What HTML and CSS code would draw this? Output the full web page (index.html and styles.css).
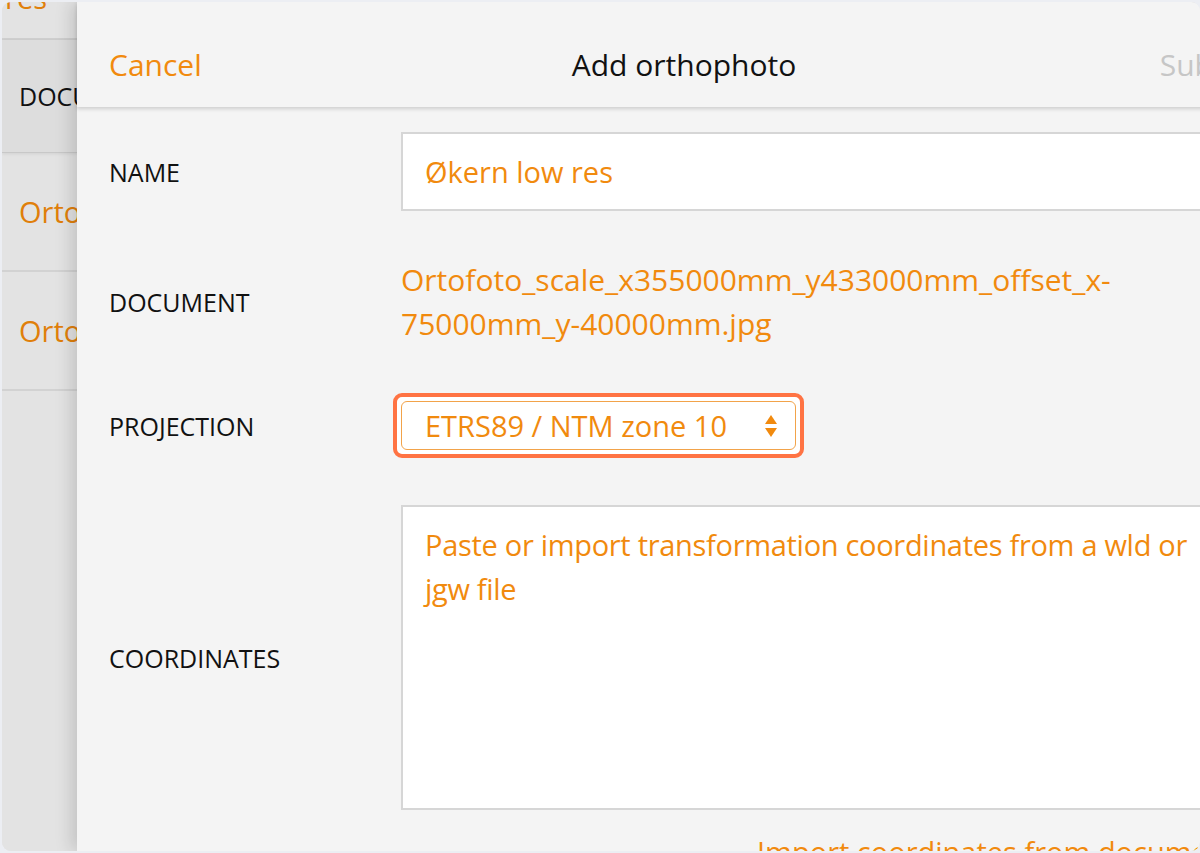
FILE: index.html
```html
<!DOCTYPE html>
<html lang="en">
<head>
<meta charset="utf-8">
<title>Add orthophoto</title>
<link rel="stylesheet" href="styles.css">
</head>
<body>
<div class="screen">
  <aside class="sidebar">
    <div class="side-row side-top"><span class="side-link side-cut">Økern low res</span></div>
    <div class="side-row side-head"><span class="side-label">DOCUMENT</span></div>
    <div class="side-row side-item"><span class="side-link">Ortofoto</span></div>
    <div class="side-row side-item"><span class="side-link">Ortofoto</span></div>
  </aside>
  <section class="modal">
    <header class="modal-head">
      <span class="head-btn">Cancel</span>
      <span class="head-title">Add orthophoto</span>
      <span class="head-btn head-submit">Submit</span>
    </header>
    <div class="form">
      <div class="row row-name">
        <label class="label">NAME</label>
        <div class="input"><span class="value">Økern low res</span></div>
      </div>
      <div class="row row-doc">
        <label class="label">DOCUMENT</label>
        <div class="doc-text">Ortofoto_scale_x355000mm_y433000mm_offset_x-<br>75000mm_y-40000mm.jpg</div>
      </div>
      <div class="row row-proj">
        <label class="label">PROJECTION</label>
        <div class="select-ring">
          <div class="select">
            <span class="value">ETRS89 / NTM zone 10</span>
            <svg class="arrows" width="14" height="26" viewBox="0 0 14 26" aria-hidden="true">
              <path d="M7 2 L13 11 L1 11 Z" fill="#f18a0e"/>
              <path d="M1 15 L13 15 L7 24 Z" fill="#f18a0e"/>
            </svg>
          </div>
        </div>
      </div>
      <div class="row row-coord">
        <label class="label">COORDINATES</label>
        <div class="textarea"><span class="placeholder">Paste or import transformation coordinates from a wld or jgw file</span></div>
      </div>
      <div class="import-row"><span class="import-link">Import coordinates from document</span></div>
    </div>
  </section>
</div>
</body>
</html>
```

FILE: styles.css
```css
html, body {
  margin: 0;
  padding: 0;
  background: #eceef3;
  overflow: hidden;
}
body {
  width: 1200px;
  height: 853px;
  font-family: "Open Sans", "Noto Sans", sans-serif;
}
.screen {
  margin: 2px 0 2px 2px;
  height: 849px;
  border-radius: 9px;
  overflow: hidden;
  display: flex;
  background: #e3e3e3;
}
.sidebar {
  width: 75px;
  flex: none;
  overflow: hidden;
  background: #e3e3e3;
}
.side-row {
  width: 300px;
  flex: none;
  box-sizing: border-box;
  padding-left: 17px;
  display: flex;
  align-items: center;
  border-bottom: 2px solid #cfcfcf;
}
.side-top {
  width: 75px;
  height: 38px;
  padding: 0 30px 0 0;
  align-items: flex-start;
  justify-content: flex-end;
  overflow: hidden;
}
.side-cut {
  margin-top: -24px;
}
.side-head {
  height: 113px;
  background: #dddddd;
  border-bottom: 1px solid #c8c8c8;
  box-shadow: 0 1px 3px rgba(0,0,0,0.08);
}
.side-item {
  height: 119px;
  border-bottom: 2px solid #d2d2d2;
}
.side-label {
  font-size: 25px;
  color: #111;
}
.side-link {
  font-size: 29px;
  color: #e07f0a;
  white-space: nowrap;
}
.modal {
  width: 1214px;
  flex: none;
  background: #f4f4f4;
  box-shadow: -6px 0 16px rgba(0,0,0,0.14);
  display: flex;
  flex-direction: column;
  position: relative;
}
.modal-head {
  flex: none;
  height: 105px;
  box-sizing: border-box;
  padding: 20px 32px 0 32px;
  display: flex;
  align-items: center;
  justify-content: space-between;
  background: #f4f4f4;
  box-shadow: 0 2px 4px rgba(0,0,0,0.16);
  position: relative;
  z-index: 1;
}
.head-btn {
  font-size: 30px;
  color: #f18a0e;
  width: 160px;
}
.head-submit {
  color: #c6c6c6;
  text-align: right;
}
.head-title {
  font-size: 30px;
  color: #111;
}
.form {
  flex: none;
  padding: 0 32px;
  display: flex;
  flex-direction: column;
}
.row {
  flex: none;
  display: flex;
  align-items: center;
}
.label {
  width: 292px;
  flex: none;
  font-size: 25px;
  color: #111;
}
.value, .placeholder, .import-link {
  font-size: 29px;
  color: #f18a0e;
}
.doc-text {
  font-size: 30px;
  color: #f18a0e;
  line-height: 44px;
  white-space: nowrap;
}
.row-name {
  margin-top: 25px;
}
.input {
  flex: 1;
  height: 79px;
  box-sizing: border-box;
  background: #fff;
  border: 2px solid #d6d6d6;
  display: flex;
  align-items: center;
  padding-left: 22px;
}
.row-doc {
  margin-top: 47px;
}
.row-proj {
  margin-top: 47px;
}
.select-ring {
  margin-left: -8px;
  padding: 4px;
  border: 4px solid #ff7343;
  border-radius: 9px;
  background: #fff;
}
.select {
  width: 395px;
  height: 49px;
  box-sizing: border-box;
  border: 1px solid #f2a34a;
  border-radius: 6px;
  background: #fff;
  display: flex;
  align-items: center;
  justify-content: space-between;
  padding: 0 17px 0 23px;
}
.arrows {
  display: block;
}
.row-coord {
  margin-top: 47px;
}
.textarea {
  flex: 1;
  height: 305px;
  box-sizing: border-box;
  background: #fff;
  border: 2px solid #d6d6d6;
  padding: 16px 22px;
}
.placeholder {
  display: block;
  line-height: 44px;
  width: 780px;
  letter-spacing: -0.3px;
}
.import-row {
  flex: none;
  margin-top: 22px;
  padding-right: 23px;
  display: flex;
  justify-content: flex-end;
}
.import-link {
  white-space: nowrap;
}
```
